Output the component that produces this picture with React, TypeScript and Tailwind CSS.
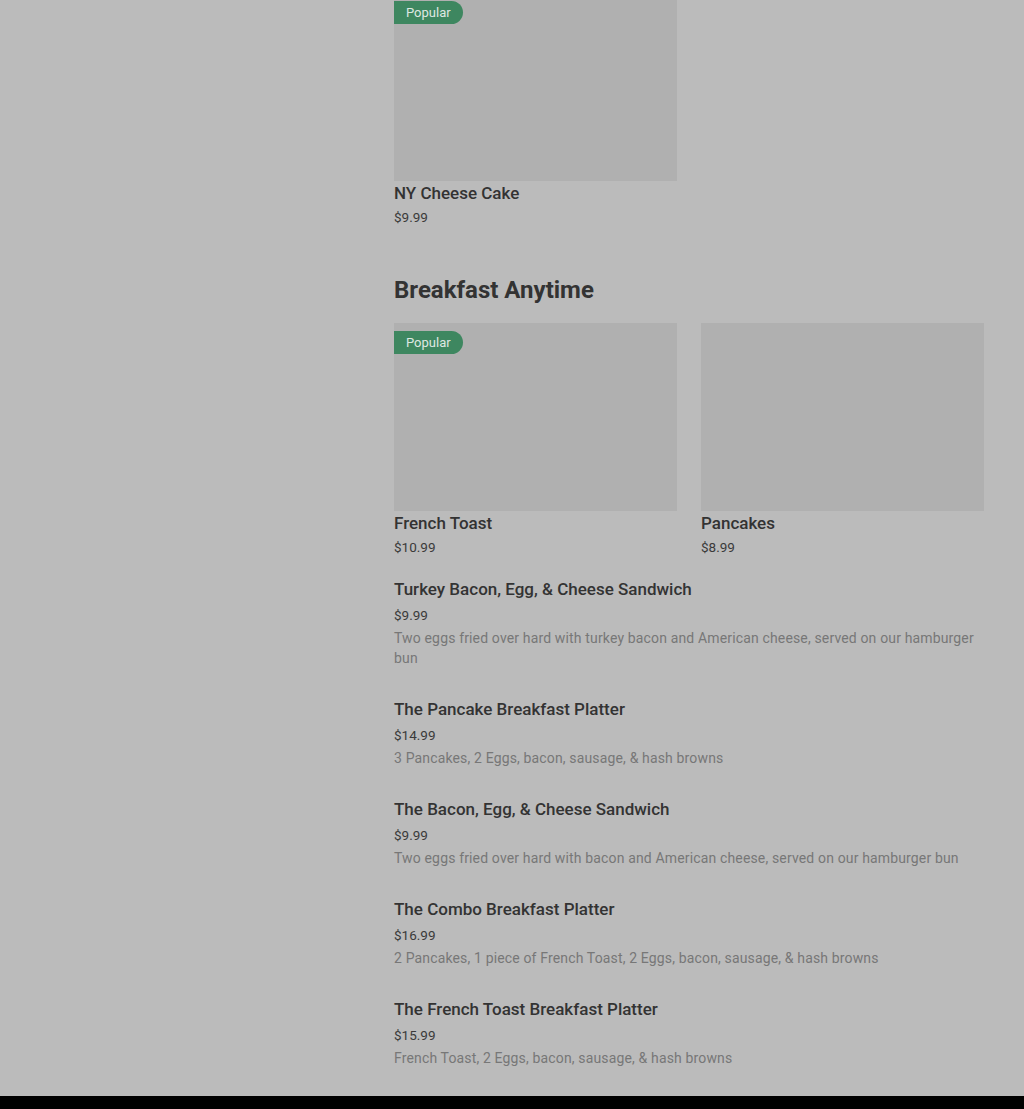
import React from 'react';

type Card = { name: string; price: string; popular?: boolean };
type Item = { name: string; price: string; description: string };

const breakfastCards: Card[] = [
  { name: 'French Toast', price: '$10.99', popular: true },
  { name: 'Pancakes', price: '$8.99' },
];

const breakfastItems: Item[] = [
  {
    name: 'Turkey Bacon, Egg, & Cheese Sandwich',
    price: '$9.99',
    description: 'Two eggs fried over hard with turkey bacon and American cheese, served on our hamburger bun',
  },
  { name: 'The Pancake Breakfast Platter', price: '$14.99', description: '3 Pancakes, 2 Eggs, bacon, sausage, & hash browns' },
  {
    name: 'The Bacon, Egg, & Cheese Sandwich',
    price: '$9.99',
    description: 'Two eggs fried over hard with bacon and American cheese, served on our hamburger bun',
  },
  {
    name: 'The Combo Breakfast Platter',
    price: '$16.99',
    description: '2 Pancakes, 1 piece of French Toast, 2 Eggs, bacon, sausage, & hash browns',
  },
  { name: 'The French Toast Breakfast Platter', price: '$15.99', description: 'French Toast, 2 Eggs, bacon, sausage, & hash browns' },
];

const MenuCard: React.FC<{ card: Card }> = ({ card }) => (
  <div>
    <div className="relative h-[188px] bg-[#b0b0b0]">
      {card.popular && (
        <span className="absolute left-0 top-2 flex h-[23px] items-center rounded-r-full bg-[#3e8760] pl-3 pr-3 text-[13px] text-[#dfe8e2]">
          Popular
        </span>
      )}
    </div>
    <p className="text-[17px] font-medium leading-6 text-[#333]">{card.name}</p>
    <p className="mt-[2px] text-[13.5px] leading-5 text-[#3a3a3a]">{card.price}</p>
  </div>
);

const App: React.FC = () => {
  return (
    <div className="flex min-h-[1109px] flex-col bg-[#bbbbbb] font-['Roboto',sans-serif]">
      <main className="ml-[394px] w-[590px] flex-1">
        <div className="-mt-[7px] grid grid-cols-2 gap-6">
          <MenuCard card={{ name: 'NY Cheese Cake', price: '$9.99', popular: true }} />
        </div>

        <h2 className="mt-[47px] text-[24px] font-bold leading-8 text-[#333]">Breakfast Anytime</h2>

        <div className="mt-[17px] grid grid-cols-2 gap-6">
          {breakfastCards.map((card) => (
            <MenuCard key={card.name} card={card} />
          ))}
        </div>

        <div className="mt-5 flex flex-col gap-[29px] pb-7">
          {breakfastItems.map((item) => (
            <div key={item.name}>
              <p className="text-[17px] font-medium leading-6 text-[#333]">{item.name}</p>
              <p className="mt-1 text-[13.5px] leading-5 text-[#3a3a3a]">{item.price}</p>
              <p className="mt-[3px] text-sm leading-5 tracking-[0.15px] text-[#777]">{item.description}</p>
            </div>
          ))}
        </div>
      </main>
      <footer className="h-[13px] bg-black" />
    </div>
  );
};

export default App;
